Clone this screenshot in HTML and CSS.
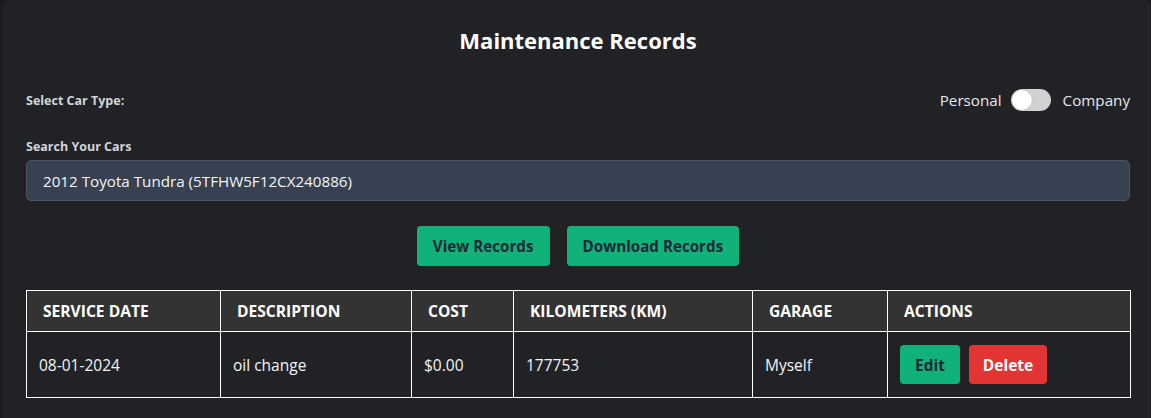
FILE: index.html
```html
<!DOCTYPE html>
<html lang="en">
<head>
<meta charset="utf-8">
<title>Maintenance Records</title>
<link rel="stylesheet" href="styles.css">
</head>
<body>
<div class="card">
  <h1 class="title">Maintenance Records</h1>
  <div class="type-row">
    <span class="label">Select Car Type:</span>
    <div class="toggle-group">
      <span class="toggle-text">Personal</span>
      <span class="toggle"><span class="knob"></span></span>
      <span class="toggle-text">Company</span>
    </div>
  </div>
  <div class="label search-label">Search Your Cars</div>
  <div class="search-input">2012 Toyota Tundra (5TFHW5F12CX240886)</div>
  <div class="btn-row">
    <button class="btn btn-green">View Records</button>
    <button class="btn btn-green">Download Records</button>
  </div>
  <table class="records">
    <colgroup>
      <col class="c1"><col class="c2"><col class="c3"><col class="c4"><col class="c5"><col class="c6">
    </colgroup>
    <thead>
      <tr>
        <th>Service Date</th>
        <th>Description</th>
        <th>Cost</th>
        <th>Kilometers (KM)</th>
        <th>Garage</th>
        <th>Actions</th>
      </tr>
    </thead>
    <tbody>
      <tr>
        <td>08-01-2024</td>
        <td>oil change</td>
        <td>$0.00</td>
        <td>177753</td>
        <td>Myself</td>
        <td>
          <div class="actions">
            <button class="btn btn-green btn-sm">Edit</button>
            <button class="btn btn-red btn-sm">Delete</button>
          </div>
        </td>
      </tr>
    </tbody>
  </table>
</div>
</body>
</html>
```
FILE: styles.css
```css
* { box-sizing: border-box; }
html, body { margin: 0; padding: 0; }
body {
  background: #1a1b1d;
  font-family: "Open Sans", "Noto Sans", sans-serif;
  color: #e5e7eb;
}
.card {
  background: #212225;
  margin: 0 1px 0 2px;
  min-height: 418px;
  padding: 24px 19px 0 24px;
  border-radius: 8px 8px 0 0;
  border-right: 1px solid #2e2f33;
}
.title {
  margin: 0;
  text-align: center;
  font-size: 22px;
  line-height: 32px;
  font-weight: 700;
  color: #ffffff;
}
.type-row {
  margin-top: 22px;
  height: 44px;
  display: flex;
  align-items: center;
  justify-content: space-between;
}
.label {
  font-size: 12.5px;
  font-weight: 700;
  color: #d1d5db;
}
.toggle-group {
  display: flex;
  align-items: center;
  gap: 9px;
}
.toggle-text {
  font-size: 15.2px;
  color: #e5e7eb;
}
.toggle {
  width: 40px;
  height: 22px;
  border-radius: 11px;
  background: #d1d1d3;
  display: flex;
  align-items: center;
  padding: 0 1px;
  margin-right: 3px;
}
.knob {
  width: 20px;
  height: 20px;
  border-radius: 50%;
  background: #ffffff;
  box-shadow: 0 0 1px rgba(0,0,0,0.3);
}
.search-label {
  margin-top: 15px;
  line-height: 20px;
}
.search-input {
  margin-top: 3px;
  height: 41px;
  background: #374151;
  border: 1px solid #4b5563;
  border-radius: 5px;
  padding: 0 16px;
  display: flex;
  align-items: center;
  font-size: 15.2px;
  color: #f3f4f6;
}
.btn-row {
  margin-top: 25px;
  display: flex;
  justify-content: center;
  gap: 17px;
}
.btn {
  font-family: inherit;
  border: none;
  border-radius: 4px;
  font-weight: 700;
  font-size: 15.2px;
  height: 40px;
  padding: 0 16px;
  cursor: pointer;
}
.btn-green { background: #10b27a; color: #1f2937; }
.btn-red { background: #e33434; color: #ffffff; }
.btn-sm { height: 39px; }
.records {
  margin-top: 24px;
  width: 1104px;
  border-collapse: collapse;
  table-layout: fixed;
}
.c1 { width: 194px; }
.c2 { width: 191px; }
.c3 { width: 102px; }
.c4 { width: 239px; }
.c5 { width: 135px; }
.c6 { width: 243px; }
.records th, .records td {
  border: 1px solid #ffffff;
  text-align: left;
}
.records th {
  background: #333333;
  color: #ffffff;
  font-size: 15.6px;
  font-weight: 700;
  text-transform: uppercase;
  height: 41px;
  padding: 0 16px;
}
.records td {
  height: 66px;
  padding: 0 12px;
  font-size: 15.5px;
  color: #f3f4f6;
}
.actions {
  display: flex;
  gap: 9px;
}
.actions .btn { font-size: 15.5px; }
.actions .btn-green { width: 60px; padding: 0; }
.actions .btn-red { width: 78px; padding: 0; }
```
